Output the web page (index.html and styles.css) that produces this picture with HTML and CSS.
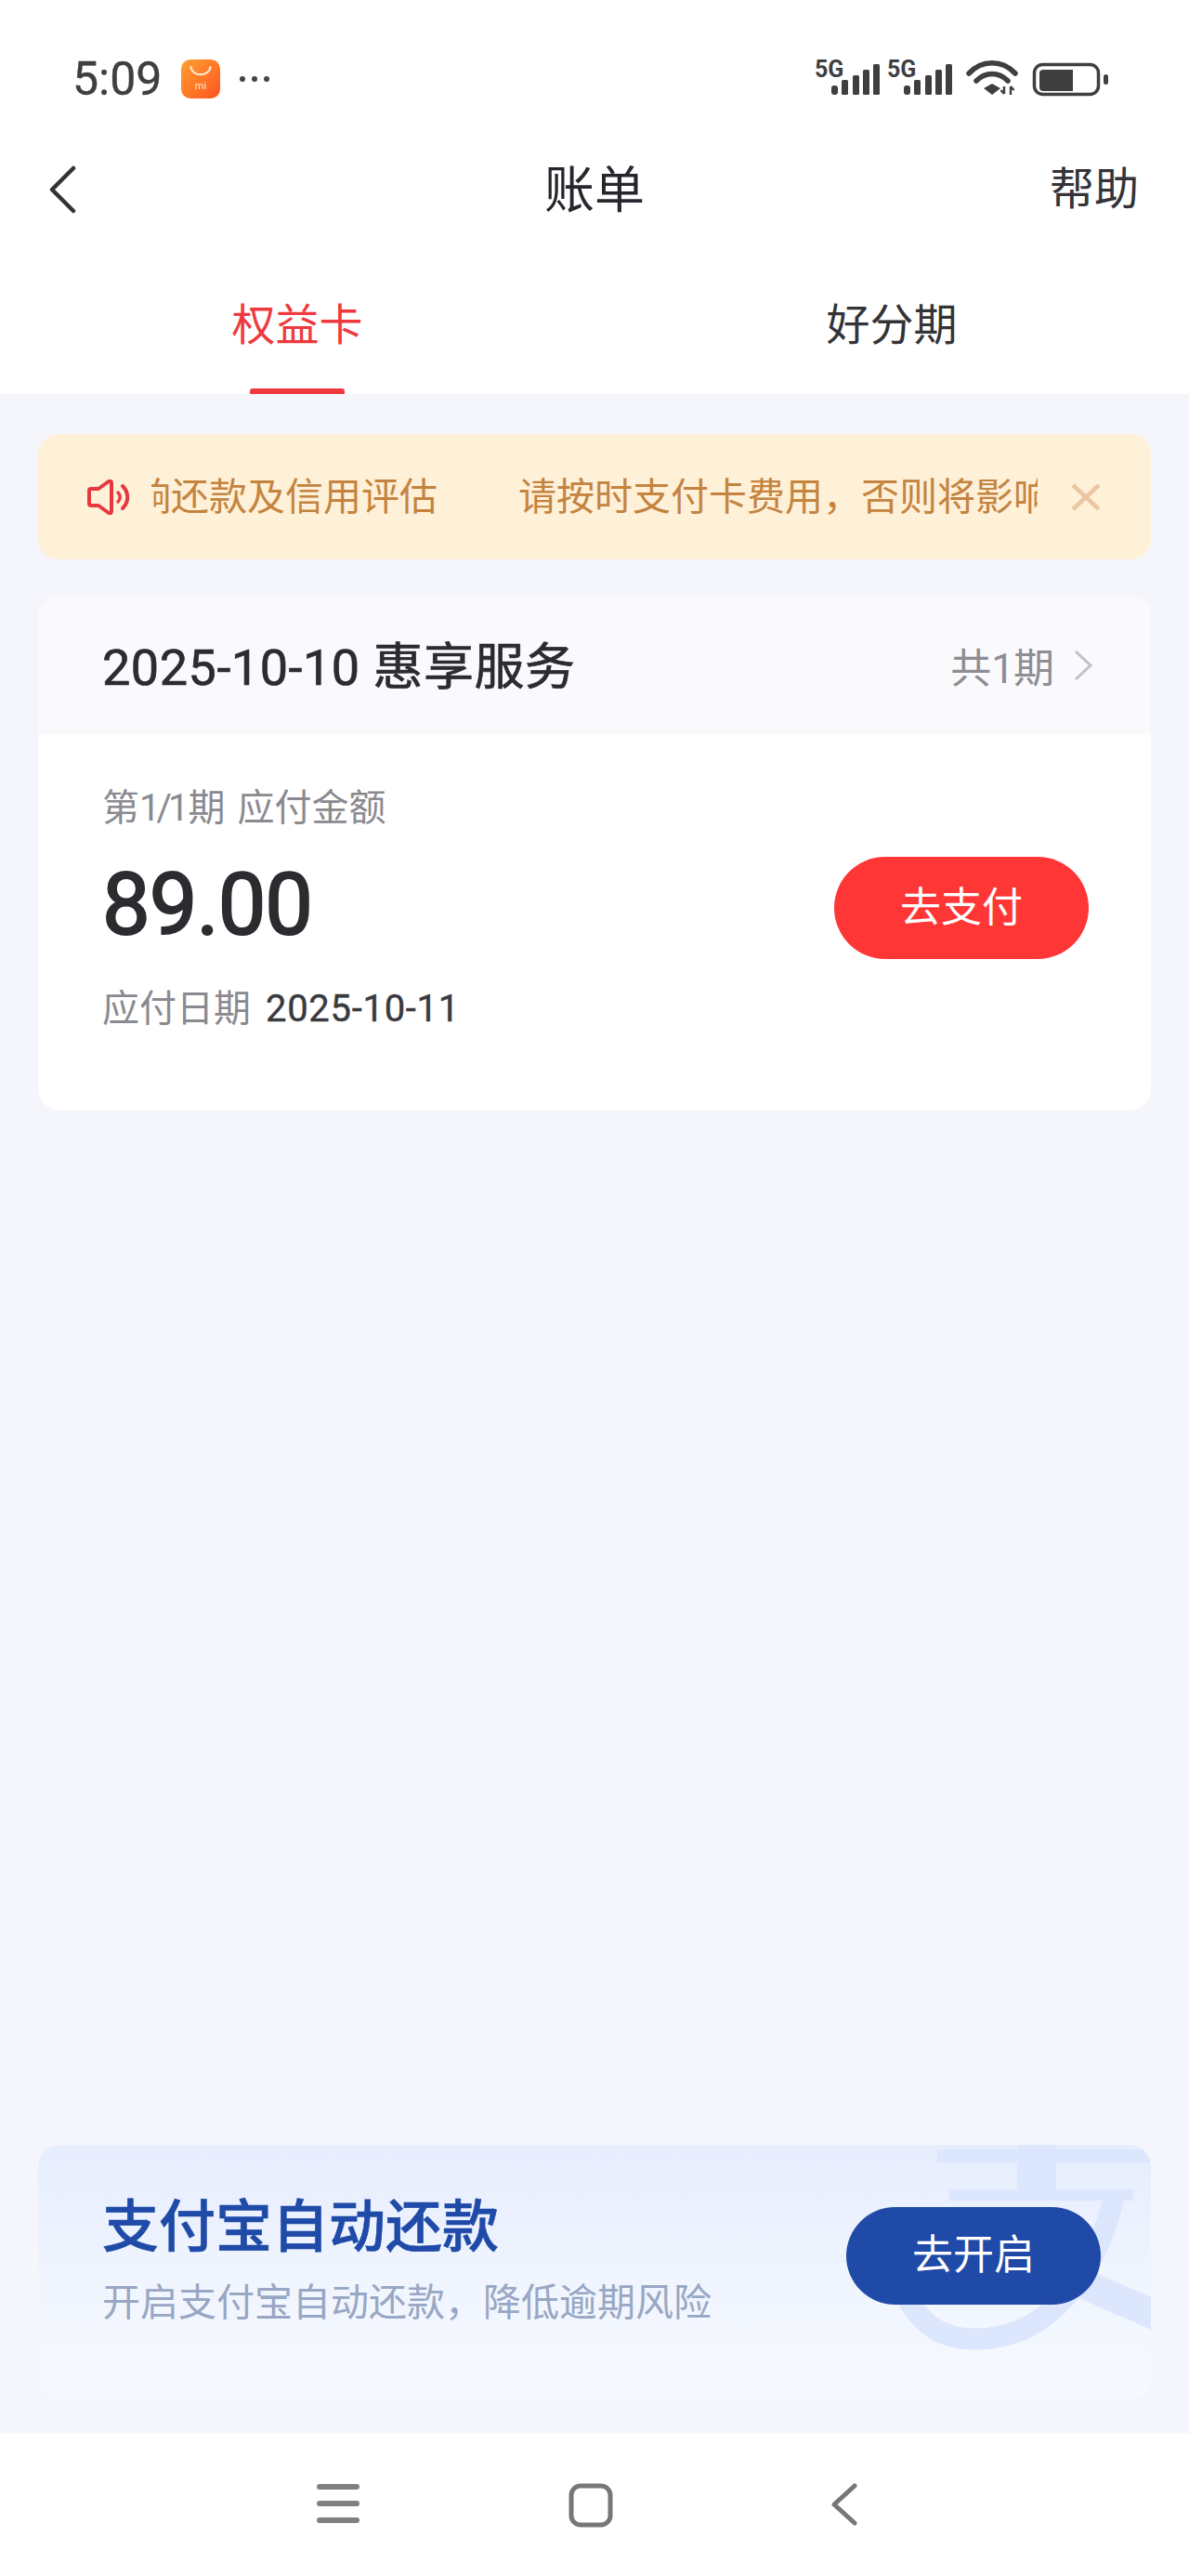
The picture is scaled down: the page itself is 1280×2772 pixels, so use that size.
FILE: index.html
```html
<!DOCTYPE html>
<html lang="zh-CN">
<head>
  <meta charset="UTF-8">
  <meta name="viewport" content="width=device-width, initial-scale=1">
  <title>账单</title>
  <link rel="stylesheet" href="styles.css">
</head>

<body>
<div class="page">

  <!-- status bar -->
  <div class="status-bar">
    <div class="status-left">
      <span class="status-time">5:09</span>
      <svg class="mi-icon" width="42" height="42" viewBox="0 0 42 42">
        <defs>
          <linearGradient id="miGrad" x1="0" y1="0" x2="1" y2="1">
            <stop offset="0" stop-color="#ffa032"/>
            <stop offset="1" stop-color="#ff541e"/>
          </linearGradient>
        </defs>
        <rect width="42" height="42" rx="10" fill="url(#miGrad)"/>
        <path d="M10.500 8 C11.500 19 30.500 19 31.500 8" fill="none" stroke="#ffe9d2" stroke-width="2.200" stroke-linecap="round"/>
        <text class="mi-text" x="21" y="32" text-anchor="middle">mi</text>
      </svg>
      <svg class="status-dots" width="34" height="8" viewBox="0 0 34 8">
        <circle cx="4" cy="4" r="3" fill="#444"/>
        <circle cx="17" cy="4" r="3" fill="#444"/>
        <circle cx="30" cy="4" r="3" fill="#444"/>
      </svg>
    </div>
    <svg class="status-right" width="316" height="40" viewBox="0 0 316 40">
      <g id="sig" fill="#3f3f3f">
        <text class="net-text" x="0" y="19">5G</text>
        <rect x="18" y="28" width="7" height="10" rx="3"/>
        <rect x="29" y="22" width="7" height="16" rx="1.500"/>
        <rect x="41" y="17" width="7" height="21" rx="1.500"/>
        <rect x="52" y="11" width="7" height="27" rx="1.500"/>
        <rect x="63" y="5" width="7" height="33" rx="1.500"/>
      </g>
      <use href="#sig" x="78"/>
      <g fill="none" stroke="#3f3f3f" stroke-linecap="round">
        <path d="M166 15 C180 0 202 0 216 15" stroke-width="5.500"/>
        <path d="M174 23 C184 13 198 13 208 23" stroke-width="5.500"/>
      </g>
      <path d="M182 31 L191 26 L200 31 L191 38 Z" fill="#3f3f3f"/>
      <path d="M204 29 V37 M200.500 33 L204 37 M211 38 V29 M211 29 L214.500 33" fill="none" stroke="#3f3f3f" stroke-width="2.400"/>
      <rect x="236.500" y="5.500" width="69" height="32" rx="9" fill="none" stroke="#3f3f3f" stroke-width="3.500"/>
      <path d="M246 11 H278 V34 H246 Q242 34 242 30 V15 Q242 11 246 11 Z" fill="#3f3f3f"/>
      <rect x="311" y="16" width="5" height="11" rx="2.500" fill="#3f3f3f"/>
    </svg>
  </div>

  <!-- title row -->
  <div class="title-bar">
    <svg class="back-icon" width="30" height="52" viewBox="0 0 30 52">
      <path d="M27 3 L4 26 L27 49" fill="none" stroke="#333" stroke-width="4.500" stroke-linecap="round" stroke-linejoin="round"/>
    </svg>
    <span class="title-text">账单</span>
    <span class="help-text">帮助</span>
  </div>

  <!-- tabs -->
  <div class="tabs">
    <div class="tab active">
      <span>权益卡</span>
      <div class="tab-line"></div>
    </div>
    <div class="tab">
      <span>好分期</span>
    </div>
  </div>

  <div class="main">

    <div class="notice">
      <svg class="notice-icon" width="48" height="38" viewBox="0 0 48 38">
        <path d="M3 12 Q3 10 5 10 H13 L24 2 Q27 0.500 27 4 V34 Q27 37.500 24 36 L13 28 H5 Q3 28 3 26 Z" fill="none" stroke="#e8383f" stroke-width="4" stroke-linejoin="round"/>
        <path d="M34 14 C37 17 37 21 34 24" fill="none" stroke="#e8383f" stroke-width="3.400" stroke-linecap="round"/>
        <path d="M39 7 C46 14 46 24 39 31" fill="none" stroke="#e8383f" stroke-width="4" stroke-linecap="round"/>
      </svg>
      <div class="marquee">
        <div class="marquee-track">
          <span>请按时支付卡费用，否则将影响还款及信用评估</span>
          <span>请按时支付卡费用，否则将影响还款及信用评估</span>
        </div>
      </div>
      <svg class="notice-close" width="32" height="30" viewBox="0 0 32 30">
        <path d="M2 2 L30 28 M30 2 L2 28" fill="none" stroke="#ebc6a2" stroke-width="4.500"/>
      </svg>
    </div>

    <div class="bill-card">
      <div class="bill-head">
        <span class="bill-title">2025-10-10 惠享服务</span>
        <div class="bill-count">
          <span>共<span class="thin-num">1</span>期</span>
          <svg width="20" height="34" viewBox="0 0 20 34">
            <path d="M2 2 L18 17 L2 32" fill="none" stroke="#c2c2c6" stroke-width="3"/>
          </svg>
        </div>
      </div>
      <div class="bill-body">
        <div class="bill-info">
          <div class="bill-label">第<span class="thin-num">1/1</span>期 应付金额</div>
          <div class="bill-amount">89.00</div>
          <div class="bill-date"><span class="bill-date-label">应付日期</span>2025-10-11</div>
        </div>
        <div class="pay-btn">去支付</div>
      </div>
    </div>

    <div class="auto-card">
      <!-- alipay mark, faded -->
      <svg class="auto-mark" width="289" height="275" viewBox="0 0 289 275">
        <g fill="none" stroke="#dce7fd">
          <path d="M59 12 H289" stroke-width="14"/>
          <path d="M166 0 V52" stroke-width="42"/>
          <path d="M72 54 H270" stroke-width="12"/>
          <path d="M250 52 C236 120 190 209 100 209 C60 209 36 190 20 150" stroke-width="23"/>
          <path d="M140 116 L295 184" stroke-width="32"/>
        </g>
      </svg>
      <div class="auto-info">
        <div class="auto-title">支付宝自动还款</div>
        <div class="auto-sub">开启支付宝自动还款，降低逾期风险</div>
      </div>
      <div class="auto-btn">去开启</div>
    </div>

  </div>

  <!-- system nav -->
  <div class="sys-nav">
    <svg width="46" height="44" viewBox="0 0 46 44">
      <path d="M3 4 H43 M3 22 H43 M3 40 H43" fill="none" stroke="#808080" stroke-width="6" stroke-linecap="round"/>
    </svg>
    <svg width="48" height="48" viewBox="0 0 48 48">
      <rect x="3" y="3" width="42" height="42" rx="10" fill="none" stroke="#777" stroke-width="5"/>
    </svg>
    <svg class="nav-back" width="30" height="46" viewBox="0 0 30 46">
      <path d="M26 3 L4 23 L26 43" fill="none" stroke="#777" stroke-width="5" stroke-linecap="round" stroke-linejoin="round"/>
    </svg>
  </div>

</div>
</body>
</html>
```

FILE: styles.css
```css
body {
  margin: 0;
  padding: 0;
  font-family: "Roboto", "Noto Sans CJK SC", sans-serif;
  background: #f5f5fc;
}
.page {
  width: 1280px;
  height: 2772px;
  display: flex;
  flex-direction: column;
  overflow: hidden;
}

/* status bar */
.status-bar {
  height: 142px;
  box-sizing: border-box;
  padding: 64px 87px 0 78px;
  display: flex;
  justify-content: space-between;
  align-items: flex-start;
  background: white;
}
.status-left {
  display: flex;
  align-items: center;
  height: 42px;
}
.status-time {
  font-size: 50px;
  line-height: 42px;
  color: #3f3f3f;
  width: 117px;
  -webkit-text-stroke: 0.4px #3f3f3f;
}
.status-dots {
  margin-left: 20px;
}
.mi-text {
  font-family: "Roboto", sans-serif;
  font-size: 11px;
  fill: #ffe9d2;
}
.net-text {
  font-family: "Roboto", sans-serif;
  font-size: 25px;
  font-weight: 700;
}

/* title */
.title-bar {
  height: 122px;
  display: flex;
  align-items: center;
  justify-content: space-between;
  padding: 0 54px 0 52px;
  background: white;
  position: relative;
}
.back-icon {
  margin-top: 2px;
}
.title-text {
  position: absolute;
  left: 0;
  right: 0;
  top: 32px;
  text-align: center;
  font-size: 54px;
  line-height: 64px;
  color: #26262c;
}
.help-text {
  font-size: 48px;
  line-height: 60px;
  margin-top: 2px;
  color: #333338;
}

/* tabs */
.tabs {
  height: 160px;
  display: flex;
  background: white;
}
.tab {
  flex: 1;
  display: flex;
  flex-direction: column;
  align-items: center;
  padding-top: 62px;
  box-sizing: border-box;
  font-size: 47px;
  line-height: 48px;
  color: #333338;
}
.tab.active {
  color: #ee3a3e;
}
.tab-line {
  margin-top: auto;
  width: 102px;
  height: 6px;
  border-radius: 3px 3px 0 0;
  background: #ee3a3e;
}

.main {
  flex: 1;
  display: flex;
  flex-direction: column;
  padding: 43px 41px 35px;
}

/* notice */
.notice {
  height: 135px;
  display: flex;
  align-items: center;
  box-sizing: border-box;
  padding: 0 54px 0 52px;
  background: #fff0d8;
  border-radius: 22px;
}
.notice-icon {
  flex: none;
}
.marquee {
  width: 954px;
  margin-left: 22px;
  overflow: hidden;
  flex: none;
}
.marquee-track {
  display: flex;
  gap: 87px;
  width: max-content;
  transform: translateX(-553px);
  font-size: 41px;
  line-height: 50px;
  color: #c4843f;
}
.notice-close {
  flex: none;
  margin-left: auto;
}

/* bill card */
.bill-card {
  margin-top: 39px;
  height: 554px;
  background: white;
  border-radius: 24px;
  overflow: hidden;
}
.bill-head {
  height: 150px;
  display: flex;
  align-items: center;
  justify-content: space-between;
  padding: 0 63px 0 69px;
  background: #fafafd;
}
.bill-title {
  font-size: 54px;
  line-height: 60px;
  margin-top: 6px;
  letter-spacing: 0.5px;
  color: #2c2c30;
  -webkit-text-stroke: 0.7px #2c2c30;
}
.bill-count {
  display: flex;
  align-items: center;
  gap: 21px;
  font-size: 44px;
  color: #8d8d93;
}
.thin-num {
  letter-spacing: -4px;
  margin-right: 3px;
}
.bill-body {
  display: flex;
  justify-content: space-between;
  align-items: flex-start;
  padding: 55px 67px 0 69px;
}
.bill-label {
  font-size: 40px;
  line-height: 48px;
  word-spacing: 3px;
  color: #8a8a90;
}
.bill-amount {
  margin-top: 25px;
  font-size: 92px;
  line-height: 110px;
  letter-spacing: -1px;
  color: #2c2c30;
  -webkit-text-stroke: 2px #2c2c30;
}
.bill-date {
  margin-top: 33px;
  font-size: 40px;
  line-height: 48px;
  letter-spacing: 0.7px;
  color: #3a3a3e;
  -webkit-text-stroke: 0.4px #3a3a3e;
}
.bill-date-label {
  margin-right: 16px;
  letter-spacing: 0;
  color: #8a8a90;
  -webkit-text-stroke: 0;
}
.pay-btn {
  margin-top: 76px;
  width: 274px;
  height: 110px;
  border-radius: 55px;
  background: #ff3636;
  color: white;
  font-size: 44px;
  line-height: 110px;
  text-align: center;
}

/* alipay card */
.auto-card {
  margin-top: auto;
  height: 275px;
  box-sizing: border-box;
  padding: 54px 54px 0 69px;
  display: flex;
  justify-content: space-between;
  align-items: flex-start;
  border-radius: 24px;
  background: linear-gradient(180deg, #e6edfd 0%, #f0f5fe 55%, #f7f9ff 100%);
  position: relative;
  overflow: hidden;
}
.auto-mark {
  position: absolute;
  top: 0;
  right: 0;
}
.auto-info {
  position: relative;
}
.auto-title {
  font-size: 61px;
  line-height: 70px;
  font-weight: 500;
  color: #1f4aa8;
  -webkit-text-stroke: 0.6px #1f4aa8;
}
.auto-sub {
  margin-top: 21px;
  font-size: 41px;
  line-height: 50px;
  color: #98a7c4;
}
.auto-btn {
  position: relative;
  margin-top: 13px;
  width: 274px;
  height: 105px;
  border-radius: 53px;
  background: #1f4aa8;
  color: white;
  font-size: 44px;
  line-height: 105px;
  text-align: center;
}

/* system nav */
.sys-nav {
  height: 154px;
  flex: none;
  display: flex;
  align-items: flex-start;
  background: white;
  padding: 54px 0 0 341px;
  box-sizing: border-box;
  gap: 225px;
}
.nav-back {
  margin-left: 9px;
}
```
